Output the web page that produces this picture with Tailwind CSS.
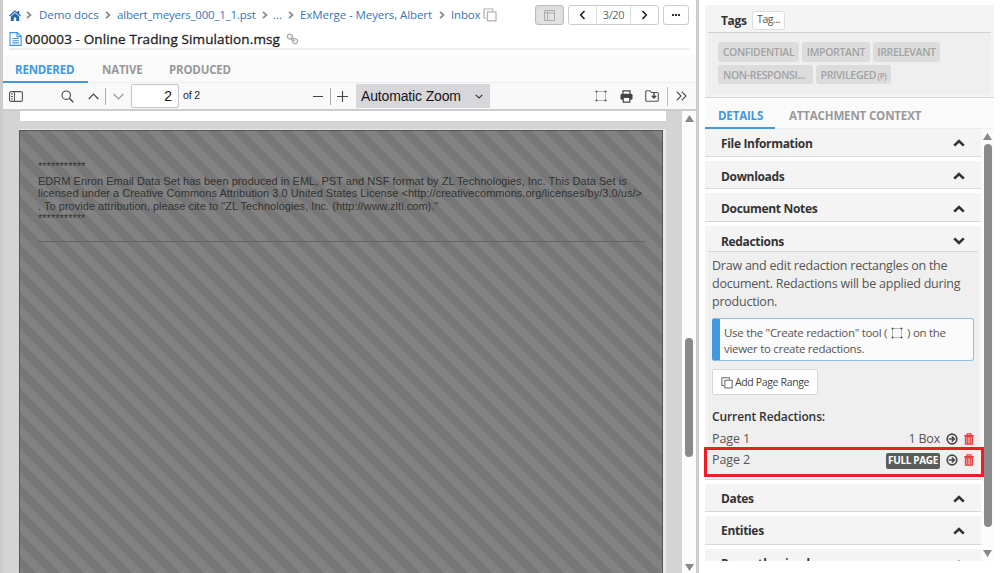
<!DOCTYPE html>
<html lang="en">
<head>
  <meta charset="UTF-8" />
  <title>000003 - Online Trading Simulation.msg</title>
  <script src="https://cdn.jsdelivr.net/npm/@tailwindcss/browser@4"></script>
</head>
<body class="w-[1000px] h-[573px] overflow-hidden bg-white font-['Open_Sans',sans-serif] text-[#444] whitespace-nowrap">

  <!-- Shared icons -->
  <svg class="hidden">
    <symbol id="up" viewBox="0 0 12 8"><path d="M1.2 6.6 6 2l4.800 4.600" fill="none" stroke="#333" stroke-width="2.700"/></symbol>
    <symbol id="down" viewBox="0 0 12 8"><path d="M1.200 1.400 6 6l4.800-4.600" fill="none" stroke="#333" stroke-width="2.700"/></symbol>
    <symbol id="crumb" viewBox="0 0 6 8"><path d="M1 .8 4.500 4 1 7.200" fill="none" stroke="#888" stroke-width="1.700"/></symbol>
    <symbol id="copy" viewBox="0 0 14 14"><path d="M4.500 3.800h8.500v9h-8.500z M3.500 10H1V1h8.800v2" fill="none" stroke="currentColor" stroke-width="1.200" stroke-linejoin="round"/></symbol>
    <symbol id="box" viewBox="0 0 12 12"><path d="M1.500 1.500h9v9h-9z" fill="none" stroke="#777" stroke-width="1" stroke-dasharray="1 1"/><path d="M.7.7h1.600v1.600H.7zM9.700.7h1.600v1.600H9.700zM.7 9.700h1.600v1.600H.7zM9.700 9.700h1.600v1.600H9.700z" fill="#333"/></symbol>
    <symbol id="go" viewBox="0 0 12 12"><circle cx="6" cy="6" r="4.800" fill="none" stroke="#4a4a4a" stroke-width="1.700"/><path d="M2.800 6h5M5.800 3.500 8.300 6 5.800 8.500" fill="none" stroke="#4a4a4a" stroke-width="1.700"/></symbol>
    <symbol id="trash" viewBox="0 0 10 12"><path d="M.2 2.600h9.600M3 2.400V.8h4v1.600" fill="none" stroke="#e5403f" stroke-width="1.300"/><path d="M1.500 3.500h7v7.600h-7z" fill="#f0a3a2" stroke="#e5403f" stroke-width="1.300"/><path d="M3.700 4v7M6.300 4v7" stroke="#e5403f" stroke-width="1"/></symbol>
  </svg>

  <div class="flex h-full">
    <!-- Document viewer -->
    <div class="flex shrink-0 w-[699px] h-full border-l-3 border-r-3 border-[#ccc]">
      <div class="flex flex-col w-full min-w-0">

        <!-- Breadcrumbs -->
        <div class="flex h-[30px] items-center pl-[6px] pr-[7px] text-[11.500px] tracking-[-0.080px] text-[#3676b8]">
          <svg class="w-[12px] h-[11px] shrink-0" viewBox="0 0 12 11"><path d="M6 .3 8.500 2.500V1h1.700v3L12 5.600l-.8.8L6 1.900.8 6.400 0 5.600z M6 3l4.200 3.600V11H7.200V7.500H4.800V11H1.800V6.600z" fill="#2467ad"/></svg>
          <svg class="w-[6px] h-[8px] ml-[5px]"><use href="#crumb"/></svg>
          <span class="w-[60px] ml-[7px]">Demo docs</span>
          <svg class="w-[6px] h-[8px] ml-[6px]"><use href="#crumb"/></svg>
          <span class="w-[138px] ml-[6px] tracking-[-0.200px]">albert_meyers_000_1_1.pst</span>
          <svg class="w-[6px] h-[8px] ml-[7px]"><use href="#crumb"/></svg>
          <span class="w-[8px] ml-[5px]">...</span>
          <svg class="w-[6px] h-[8px] ml-[7px]"><use href="#crumb"/></svg>
          <span class="w-[133px] ml-[6px]">ExMerge - Meyers, Albert</span>
          <svg class="w-[6px] h-[8px] ml-[6px]"><use href="#crumb"/></svg>
          <span class="w-[30px] ml-[6px] tracking-[-0.150px]">Inbox</span>
          <svg class="w-[14px] h-[14px] ml-[2px] text-[#b0b0b0]"><use href="#copy"/></svg>
          <div class="ml-auto flex h-[20px] text-[11px] text-[#666]">
            <div class="flex items-center justify-center w-[29px] rounded-[3px] border border-[#bbb] bg-[#e2e2e2] shadow-inner">
              <svg class="w-[11px] h-[11px]" viewBox="0 0 11 11"><path d="M.5.5h10v10H.5zM3.500.5v10M.5 3h10" fill="none" stroke="#aaa"/></svg>
            </div>
            <div class="flex ml-[4px] w-[91px] rounded-[3px] border border-[#ccc]">
              <div class="flex items-center justify-center w-[27px]"><svg class="w-[7px] h-[10px]" viewBox="0 0 7 10"><path d="M5.500 1 1.700 5l3.800 4" fill="none" stroke="#222" stroke-width="1.600"/></svg></div>
              <div class="flex items-center justify-center w-[35px] border-x border-[#ddd] tracking-[-0.300px]">3/20</div>
              <div class="flex items-center justify-center w-[27px]"><svg class="w-[7px] h-[10px]" viewBox="0 0 7 10"><path d="M1.500 1 5.300 5 1.500 9" fill="none" stroke="#222" stroke-width="1.600"/></svg></div>
            </div>
            <div class="flex items-center justify-center gap-[1px] ml-[4px] w-[26px] rounded-[3px] border border-[#ccc]">
              <i class="w-[2px] h-[2px] bg-[#333]"></i><i class="w-[2px] h-[2px] bg-[#333]"></i><i class="w-[2px] h-[2px] bg-[#333]"></i>
            </div>
          </div>
        </div>

        <!-- Title -->
        <div class="flex items-center h-[20px] ml-[6px] mr-[7px] border-b-2 border-[#eee] text-[#222]">
          <svg class="w-[13px] h-[14px]" viewBox="0 0 13 14"><path d="M1 .6h7.300l3.900 3.700v9.100H1zM8 .6v4h4M3.300 6.500h6.500M3.300 8.700h6.500M3.300 10.900h6.500" fill="none" stroke="#3b97e3" stroke-width="1.100"/></svg>
          <span class="w-[255px] ml-[3px] text-[13.500px] tracking-[0.110px] [-webkit-text-stroke:0.300px_#222]">000003 - Online Trading Simulation.msg</span>
          <svg class="w-[13px] h-[12px] ml-[6px]" viewBox="0 0 13 12"><g fill="none" stroke="#aaa" stroke-width="1.300"><rect x="1.200" y="1.500" width="5" height="4.500" rx="2" transform="rotate(35 4 4)"/><rect x="6.500" y="5.800" width="5" height="4.500" rx="2" transform="rotate(35 9 8)"/><path d="m4.500 4.500 4 3.500"/></g></svg>
        </div>

        <!-- View tabs -->
        <div class="flex h-[33px] pt-[5px] bg-[#fafafa] bg-clip-content text-[11.500px] tracking-[-0.200px] font-bold text-[#999] border-b border-[#eee]">
          <div class="flex items-center h-[28px] w-[85px] pl-[12px] pt-[3px] border-b-2 border-[#4398e0] text-[#4398e0]">RENDERED</div>
          <div class="flex items-center h-[28px] w-[81px] pl-[14px] pt-px">NATIVE</div>
          <div class="flex items-center h-[28px] pt-px">PRODUCED</div>
        </div>

        <!-- PDF toolbar -->
        <div class="flex items-center h-[28px] bg-[#f9f9fa] border-b-2 border-[#ccc] font-['Liberation_Sans',sans-serif] text-[#222]">
          <svg class="w-[14px] h-[11px] ml-[6px]" viewBox="0 0 14 11"><rect x=".6" y=".6" width="12.800" height="9.800" rx="1.500" fill="none" stroke="#555" stroke-width="1.100"/><path d="M5.500.5v10M2 3h2M2 5.500h2M2 8h2" stroke="#555"/></svg>
          <svg class="w-[13px] h-[13px] ml-[38px]" viewBox="0 0 13 13"><path d="m8.300 8.300 4 4" stroke="#444" stroke-width="1.300"/><circle cx="5.200" cy="5.200" r="4.200" fill="none" stroke="#444" stroke-width="1.100"/></svg>
          <svg class="w-[11px] h-[7px] ml-[14px]" viewBox="0 0 11 7"><path d="M.7 6 5.500 1.200 10.300 6" fill="none" stroke="#444" stroke-width="1.200"/></svg>
          <i class="w-px h-[17px] ml-[6px] bg-[#aaa]"></i>
          <svg class="w-[11px] h-[7px] ml-[7px]" viewBox="0 0 11 7"><path d="M.7 1 5.500 5.800 10.300 1" fill="none" stroke="#999" stroke-width="1.200"/></svg>
          <div class="flex items-center justify-end w-[48px] h-[24px] ml-[7px] pr-[6px] pt-px rounded-[2px] border border-[#c4c4c8] bg-white text-[14.500px]">2</div>
          <span class="ml-[4px] w-[18px] text-[10.500px] tracking-[-0.100px]">of 2</span>
          <i class="w-[10px] h-px ml-[112px] bg-[#444]"></i>
          <i class="w-px h-[17px] ml-[7px] bg-[#aaa]"></i>
          <svg class="w-[11px] h-[11px] ml-[6px]" viewBox="0 0 11 11"><path d="M0 5.500h11M5.500 0v11" stroke="#444" stroke-width="1.100"/></svg>
          <div class="flex items-center w-[134px] h-[24px] ml-[8px] pl-[5px] pr-[7px] bg-[#d7d7db] text-[14px] tracking-[-0.150px] text-[#15141a]">Automatic Zoom
            <svg class="w-[8px] h-[5px] ml-auto" viewBox="0 0 8 5"><path d="M.7.8 4 4 7.300.8" fill="none" stroke="#333" stroke-width="1.100"/></svg>
          </div>
          <svg class="w-[12px] h-[12px] ml-[105px]"><use href="#box"/></svg>
          <svg class="w-[13px] h-[13px] ml-[13px]" viewBox="0 0 13 13"><path d="M3 4V.8h7V4" fill="#fff" stroke="#444" stroke-width="1.200"/><rect x=".5" y="3.800" width="12" height="6" rx="1.500" fill="#444"/><path d="M3.200 7.500h6.600v4.700H3.200z" fill="#fff" stroke="#444" stroke-width="1.200"/></svg>
          <svg class="w-[14px] h-[12px] ml-[12px]" viewBox="0 0 14 12"><path d="M2 11.300A1.300 1.300 0 0 1 .7 10V2A1.300 1.300 0 0 1 2 .7h3l1.500 1.800H12A1.300 1.300 0 0 1 13.300 4v6a1.300 1.300 0 0 1-1.300 1.300H2" fill="none" stroke="#555" stroke-width="1.100"/><path d="M9 2.500v5M6.800 5.800 9 8l2.200-2.200" fill="none" stroke="#444" stroke-width="1.400"/></svg>
          <i class="w-px h-[19px] ml-[8px] bg-[#bbb]"></i>
          <svg class="w-[11px] h-[10px] ml-[8px]" viewBox="0 0 11 10"><path d="m.7.600 4.300 4.400-4.300 4.400M5.700.600 10 5l-4.300 4.400" fill="none" stroke="#444" stroke-width="1.100"/></svg>
        </div>

        <!-- Pages -->
        <div class="flex flex-1 min-h-0 bg-[#d4d4d7]">
          <div class="w-[647px] ml-[16px] h-full">
            <div class="h-[10px] ml-px bg-white"></div>
            <div class="h-[465px] mt-[8px] bg-[#e8e8e9] pt-px pr-[3px]">
              <div class="h-full border border-[#555] bg-[repeating-linear-gradient(45deg,#777_0_8.500px,#828282_8.500px_17px)] pl-[18px] pt-[29px] font-['Liberation_Sans',sans-serif] text-[11px] leading-[12.500px] tracking-[0.030px] text-[#333]">
                <p class="h-[14.500px]">***********</p>
                <p>EDRM Enron Email Data Set has been produced in EML, PST and NSF format by ZL Technologies, Inc. This Data Set is</p>
                <p>licensed under a Creative Commons Attribution 3.0 United States License &lt;http://creativecommons.org/licenses/by/3.0/us/&gt;</p>
                <p>. To provide attribution, please cite to "ZL Technologies, Inc. (http://www.zlti.com)."</p>
                <p>***********</p>
                <div class="mt-[16.500px] w-[607px] h-px bg-[#646464]"></div>
              </div>
            </div>
          </div>
          <!-- Scrollbar -->
          <div class="flex flex-col items-center w-[14px] ml-auto bg-[#fcfcfc]">
            <svg class="w-[9px] h-[7px] mt-[4px]" viewBox="0 0 9 7"><path d="M4.500 0 9 7H0z" fill="#888"/></svg>
            <i class="w-[8px] h-[119px] mt-[216px] rounded-full bg-[#8a8a8a]"></i>
            <svg class="w-[9px] h-[7px] mt-auto mb-[2px]" viewBox="0 0 9 7"><path d="M0 0h9L4.500 7z" fill="#888"/></svg>
          </div>
        </div>
      </div>
    </div>

    <!-- Details sidebar -->
    <div class="flex flex-col w-[291px] h-[561px] ml-[4px] pl-[2px] pt-[5px] overflow-hidden text-[12px] tracking-[-0.330px]">

      <!-- Tags -->
      <div class="shrink-0 h-[93px] px-[3px] bg-[#f4f4f4] border-b border-[#d4d4d4]">
        <div class="flex items-center h-[28px] pl-[13px] pt-[4px] border-b border-[#d0d0d0] font-bold text-[#333]">
          <span class="w-[31px]">Tags</span>
          <span class="flex items-center w-[33px] h-[19px] mb-px pl-[4px] rounded-[3px] border border-[#ddd] bg-white text-[10.500px] tracking-[-0.400px] font-normal text-[#555]">Tag...</span>
        </div>
        <div class="flex flex-wrap content-start gap-[3px] h-[62px] pl-[10px] pt-[9px] bg-[#efefef] text-[10.500px] font-semibold leading-[21px] text-[#a2a2a2]">
          <span class="w-[81px] h-[20px] text-center rounded-[3px] bg-[#dcdcdc]">CONFIDENTIAL</span>
          <span class="w-[68px] h-[20px] text-center rounded-[3px] bg-[#dcdcdc]">IMPORTANT</span>
          <span class="w-[67px] h-[20px] text-center rounded-[3px] bg-[#dcdcdc]">IRRELEVANT</span>
          <span class="w-[95px] h-[19px] pl-[5px] leading-[20px] rounded-[3px] bg-[#dcdcdc]">NON-RESPONSI...</span>
          <span class="w-[75px] h-[19px] text-center leading-[20px] rounded-[3px] bg-[#dcdcdc]">PRIVILEGED <small class="text-[8px] -ml-[1px]">(P)</small></span>
        </div>
      </div>

      <!-- Tabs -->
      <div class="flex shrink-0 h-[28px] mt-[3px] bg-[#fafafa] border-b border-[#eee] text-[11.500px] tracking-[-0.150px] font-bold text-[#999]">
        <div class="flex items-center h-[28px] w-[70px] pl-[13px] pt-[3px] border-b-2 border-[#4398e0] text-[#4398e0]">DETAILS</div>
        <div class="flex items-center h-[28px] pl-[14px] pt-px">ATTACHMENT CONTEXT</div>
      </div>

      <div class="flex flex-1 min-h-0">
        <div class="shrink-0 w-[276px] font-bold text-[#333]">
          <div class="flex items-center justify-between h-[28px] pt-px px-[16px] bg-[#f4f4f4] border-b border-[#d8d8d8]"><span class="pt-px">File Information</span><svg class="w-[12px] h-[8px]"><use href="#up"/></svg></div>
          <div class="flex items-center justify-between h-[28px] mt-[4px] pt-[3px] px-[16px] bg-[#f4f4f4] border-b border-[#d8d8d8]"><span class="pt-px">Downloads</span><svg class="w-[12px] h-[8px]"><use href="#up"/></svg></div>
          <div class="flex items-center justify-between h-[29px] mt-[4px] pt-[3px] px-[16px] bg-[#f4f4f4] border-b border-[#d8d8d8]"><span>Document Notes</span><svg class="w-[12px] h-[8px]"><use href="#up"/></svg></div>

          <!-- Redactions -->
          <div class="h-[254px] mt-[4px] px-[3px] bg-[#f4f4f4] border-b border-[#d8d8d8]">
            <div class="flex items-center justify-between h-[26px] pt-[5px] pl-[13px] pr-[13px] border-b border-[#d8d8d8]"><span class="pt-px">Redactions</span><svg class="w-[12px] h-[8px]"><use href="#down"/></svg></div>
            <div class="h-[225px] pl-[4px] pr-[4px] pt-[5px] bg-[#efefef] font-normal text-[#555]">
              <p class="text-[12.500px] tracking-[-0.230px] leading-[18px]">Draw and edit redaction rectangles on the<br>document. Redactions will be applied during<br>production.</p>
              <div class="h-[43px] mt-[7px] pt-[6px] pl-[4px] rounded-[3px] border border-l-8 border-[#4398e0] border-y-[#8fc0ec] border-r-[#8fc0ec] bg-[#fbfbfb] text-[11.500px] tracking-[-0.290px] leading-[16px]">
                <p class="flex items-center">Use the "Create redaction" tool (<svg class="w-[12px] h-[12px] mx-[4px]"><use href="#box"/></svg>) on the</p>
                <p>viewer to create redactions.</p>
              </div>
              <div class="flex items-center w-[106px] h-[26px] mt-[8px] pl-[8px] pt-px rounded-[2px] border border-[#d6d6d6] bg-white text-[10.500px] tracking-[-0.350px] text-[#444]">
                <svg class="w-[12px] h-[12px] mr-[2px] text-[#666]" viewBox="0 0 14 14"><use href="#copy"/></svg>Add Page Range
              </div>
              <p class="mt-[13px] text-[12px] tracking-[-0.110px] leading-[18px] font-semibold text-[#333]">Current Redactions:</p>
              <div class="relative text-[12.500px] tracking-[-0.100px]">
                <div class="flex items-center h-[23px] pt-[3px]"><span>Page 1</span><span class="ml-auto tracking-[-0.200px]">1 Box</span><svg class="w-[12px] h-[12px] ml-[6px]"><use href="#go"/></svg><svg class="w-[10px] h-[12px] ml-[6px]"><use href="#trash"/></svg></div>
                <div class="flex items-center h-[20px] pt-[2px]"><span>Page 2</span><span class="flex items-center justify-center ml-auto w-[54px] h-[16px] mt-px bg-[#5c5c5c] rounded-[2px] text-[10px] tracking-[-0.350px] font-bold text-white">FULL PAGE</span><svg class="w-[12px] h-[12px] ml-[6px]"><use href="#go"/></svg><svg class="w-[10px] h-[12px] ml-[6px]"><use href="#trash"/></svg></div>
                <div class="absolute top-[21px] -left-[8px] w-[280px] h-[30px] border-3 border-[#ee1c24]"></div>
              </div>
            </div>
          </div>

          <div class="flex items-center justify-between h-[28px] mt-[4px] pt-[2px] px-[16px] bg-[#f4f4f4] border-b border-[#d8d8d8]"><span>Dates</span><svg class="w-[12px] h-[8px]"><use href="#up"/></svg></div>
          <div class="flex items-center justify-between h-[29px] mt-[4px] pt-px px-[16px] bg-[#f4f4f4] border-b border-[#d8d8d8]"><span>Entities</span><svg class="w-[12px] h-[8px]"><use href="#up"/></svg></div>
          <div class="flex items-center justify-between h-[28px] mt-[4px] pt-px px-[16px] bg-[#f4f4f4]"><span class="tracking-[0.300px]">Parenthesized</span><svg class="w-[12px] h-[8px]"><use href="#up"/></svg></div>
        </div>
        <!-- Scrollbar -->
        <div class="flex flex-col items-center w-[13px] bg-[#fcfcfc]">
          <svg class="w-[9px] h-[7px] mt-[4px]" viewBox="0 0 9 7"><path d="M4.500 0 9 7H0z" fill="#888"/></svg>
          <i class="w-[8px] h-[383px] mt-[4px] rounded-full bg-[#8a8a8a]"></i>
          <svg class="w-[9px] h-[7px] mt-auto mb-[4px]" viewBox="0 0 9 7"><path d="M0 0h9L4.500 7z" fill="#888"/></svg>
        </div>
      </div>
    </div>
  </div>
</body>
</html>
